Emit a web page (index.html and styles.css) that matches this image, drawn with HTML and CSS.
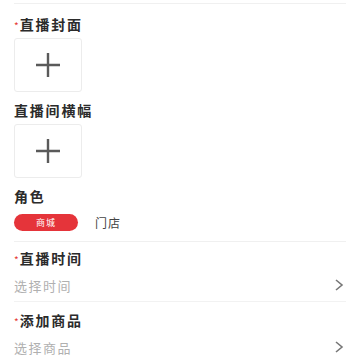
FILE: index.html
```html
<!DOCTYPE html>
<html>
<head>
    <link rel="stylesheet" href="styles.css">
</head>
<body>
    <div class="form">
        <div class="top-line"></div>

        <div class="field">
            <div class="label"><span class="req">*</span>直播封面</div>
            <div class="upload">
                <svg width="28" height="28" viewBox="0 0 28 28"><path d="M14 2v24M2 14h24" stroke="#5a5a5a" stroke-width="2.4" fill="none"/></svg>
            </div>
        </div>

        <div class="field">
            <div class="label">直播间横幅</div>
            <div class="upload">
                <svg width="28" height="28" viewBox="0 0 28 28"><path d="M14 2v24M2 14h24" stroke="#5a5a5a" stroke-width="2.4" fill="none"/></svg>
            </div>
        </div>

        <div class="field role-field">
            <div class="label">角色</div>
            <div class="roles">
                <span class="role active">商城</span>
                <span class="role">门店</span>
            </div>
        </div>

        <div class="field line-field">
            <div class="label"><span class="req">*</span>直播时间</div>
            <div class="picker">
                <span class="placeholder">选择时间</span>
                <svg width="10" height="14" viewBox="0 0 10 14"><path d="M2 2l6 5-6 5" stroke="#777" stroke-width="1.6" fill="none"/></svg>
            </div>
        </div>

        <div class="field line-field">
            <div class="label"><span class="req">*</span>添加商品</div>
            <div class="picker">
                <span class="placeholder">选择商品</span>
                <svg width="10" height="14" viewBox="0 0 10 14"><path d="M2 2l6 5-6 5" stroke="#777" stroke-width="1.6" fill="none"/></svg>
            </div>
        </div>
    </div>
</body>
</html>
```

FILE: styles.css
```css
body {
    margin: 0;
    background-color: #ffffff;
    font-family: "Noto Sans CJK SC", "Noto Sans", sans-serif;
    color: #333;
}
.form {
    padding: 0 14px;
}
.top-line {
    height: 1px;
    margin-top: 3px;
    background-color: #f0f0f0;
}
.field {
    padding-top: 10px;
}
.field + .field {
    padding-top: 8px;
}
.role-field + .line-field {
    padding-top: 6px;
}
.label {
    font-size: 14px;
    line-height: 20px;
    font-weight: 700;
    letter-spacing: 1.8px;
    color: #2b2b2b;
    display: flex;
    align-items: center;
}
.req {
    color: #e53935;
    font-size: 10px;
    line-height: 10px;
    font-weight: 400;
    letter-spacing: 0;
    margin-right: 1px;
    padding-top: 4px;
}
.upload {
    margin-top: 4px;
    width: 66px;
    height: 52px;
    border: 1px solid #ececec;
    border-radius: 3px;
    display: flex;
    align-items: center;
    justify-content: center;
}
.roles {
    display: flex;
    align-items: center;
    gap: 17px;
    margin-top: 8px;
    padding-bottom: 10px;
    border-bottom: 1px solid #f0f0f0;
}
.role {
    font-size: 12px;
    color: #444;
    letter-spacing: 1px;
}
.role.active {
    width: 64px;
    height: 17px;
    border-radius: 9px;
    background-color: #e5343a;
    color: #fff;
    font-size: 9px;
    display: flex;
    align-items: center;
    justify-content: center;
}
.picker {
    display: flex;
    align-items: center;
    justify-content: space-between;
    margin-top: 7px;
    height: 20px;
    padding-right: 2px;
}
.placeholder {
    font-size: 13px;
    color: #b0b0b0;
    letter-spacing: 1.5px;
}
.line-field .picker {
    padding-bottom: 6px;
    border-bottom: 1px solid #f2f2f2;
}
.line-field:last-child .picker {
    border-bottom: none;
}
```
